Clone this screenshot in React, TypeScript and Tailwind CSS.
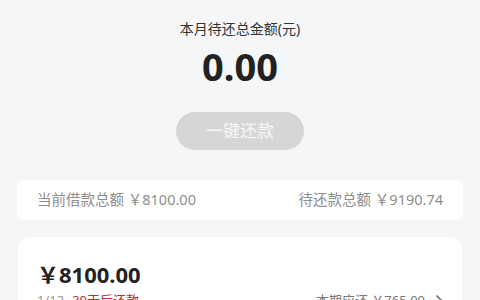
import React from "react";

export default function App() {
  return (
    <div
      className="w-[480px] h-[300px] overflow-hidden bg-[#f5f6f8] flex flex-col"
      style={{ fontFamily: '"Noto Sans", "Noto Sans CJK SC", sans-serif' }}
    >
      <div className="shrink-0 flex flex-col items-center pt-[19px]">
        <div className="text-[14px] leading-[20px] text-[#333]">本月待还总金额(元)</div>
        <div className="mt-[7px] text-[38px] leading-[40px] font-bold text-[#222]">0.00</div>
        <button className="mt-[26px] w-[128px] h-[38px] rounded-full bg-[#d6d6d6] text-[17px] text-[#f7f7f7] flex items-center justify-center">
          一键还款
        </button>
      </div>
      <div className="shrink-0 mx-[17px] mt-[30px] h-[40px] rounded-[6px] bg-white flex items-center justify-between px-[20px] text-[14.5px] text-[#8e8e8e]">
        <span>当前借款总额 ￥8100.00</span>
        <span>待还款总额 ￥9190.74</span>
      </div>
      <div className="shrink-0 mx-[18px] mt-[17px] rounded-[12px] bg-white px-[19px] pt-[22px] pb-[16px]">
        <div className="text-[22px] leading-[30px] font-bold text-[#222]">￥8100.00</div>
        <div className="mt-[2px] flex items-center justify-between text-[13px] leading-[18px]">
          <div>
            <span className="text-[#999]">1/12</span>
            <span className="ml-[8px] text-[#b8312f]">30天后还款</span>
          </div>
          <div className="flex items-center text-[#777]">
            <span>本期应还 ￥765.00</span>
            <svg className="ml-[10px]" width="8" height="12" viewBox="0 0 8 12" fill="none">
              <path d="M1.5 1.5L6 6l-4.5 4.5" stroke="#666" strokeWidth="1.5" />
            </svg>
          </div>
        </div>
      </div>
    </div>
  );
}
